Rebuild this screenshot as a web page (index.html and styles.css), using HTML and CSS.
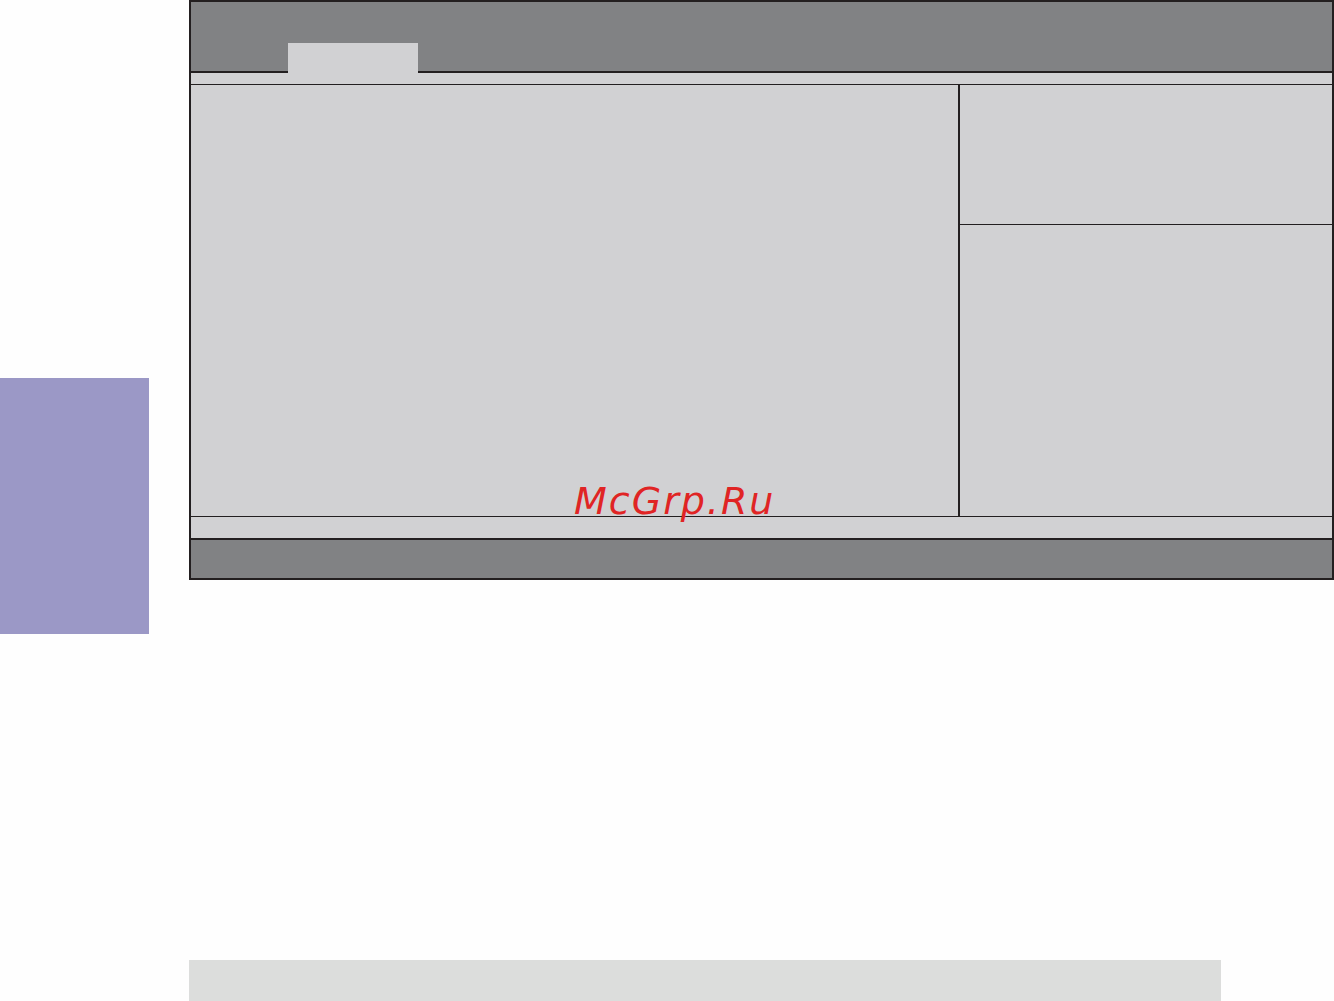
FILE: index.html
```html
<!DOCTYPE html>
<html>
<head>
<meta charset="utf-8">
<link rel="stylesheet" href="styles.css">
</head>
<body>
<div class="page">
  <div class="side">
    <div class="side-tab"></div>
  </div>
  <div class="main">
    <div class="frame">
      <div class="header">
        <div class="tab"></div>
      </div>
      <div class="strip-top"></div>
      <div class="content">
        <div class="left-panel"></div>
        <div class="right-panel">
          <div class="help-top"></div>
          <div class="help-bottom"></div>
        </div>
        <div class="watermark">McGrp.Ru</div>
      </div>
      <div class="strip-bottom"></div>
      <div class="footer"></div>
    </div>
    <div class="bottom-bar"></div>
  </div>
</div>
</body>
</html>
```
FILE: styles.css
```css
html, body {
  margin: 0;
  padding: 0;
  background: #fefefe;
}
.page {
  display: flex;
  gap: 40px;
  width: 1334px;
  height: 1001px;
  overflow: hidden;
}
.side {
  width: 149px;
  flex: none;
}
.side-tab {
  margin-top: 378px;
  height: 256px;
  background: #9b98c6;
}
.main {
  flex: none;
  width: 1145px;
  display: flex;
  flex-direction: column;
}
.frame {
  box-sizing: border-box;
  width: 1145px;
  height: 580px;
  border: 2px solid #231f20;
  display: flex;
  flex-direction: column;
  background: #d1d1d3;
}
.header {
  height: 69px;
  background: #818284;
  border-bottom: 2px solid #231f20;
  display: flex;
  align-items: flex-end;
  padding-left: 97px;
}
.tab {
  width: 130px;
  height: 30px;
  margin-bottom: -2px;
  background: #d1d1d3;
}
.strip-top {
  height: 11px;
  border-bottom: 1px solid #231f20;
}
.content {
  position: relative;
  height: 431px;
  display: flex;
  border-bottom: 1px solid #231f20;
}
.left-panel {
  width: 767px;
  border-right: 2px solid #231f20;
}
.right-panel {
  flex: 1;
  display: flex;
  flex-direction: column;
}
.help-top {
  height: 139px;
  border-bottom: 1px solid #231f20;
}
.help-bottom {
  flex: 1;
}
.watermark {
  position: absolute;
  left: 383px;
  top: 397px;
  font-family: "DejaVu Sans", sans-serif;
  font-style: italic;
  font-size: 38px;
  line-height: 1;
  letter-spacing: 2px;
  color: #e02424;
  z-index: 2;
}
.strip-bottom {
  height: 21px;
  border-bottom: 2px solid #231f20;
}
.footer {
  flex: 1;
  background: #818284;
}
.bottom-bar {
  margin-top: 380px;
  width: 1032px;
  height: 41px;
  background: #dcdddc;
}
```
